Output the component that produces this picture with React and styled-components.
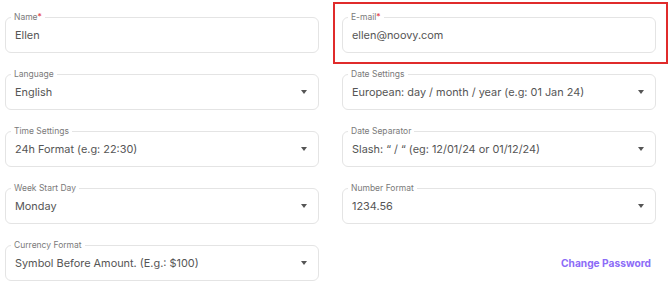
import React from "react"
import styled, { createGlobalStyle } from "styled-components"

const GlobalStyle = createGlobalStyle`
  body {
    margin: 0;
    background: #fff;
    font-family: Inter, "Noto Sans", sans-serif;
  }
`

const Form = styled.div`
  display: grid;
  grid-template-columns: 314px 314px;
  grid-auto-rows: 36px;
  column-gap: 23px;
  row-gap: 21px;
  padding: 17px 5px 0;
`

const Field = styled.div`
  position: relative;
  height: 36px;
  box-sizing: border-box;
  border: 1px solid #e4e4e4;
  border-radius: 6px;
  display: flex;
  align-items: center;
  justify-content: space-between;
  padding: 0 11px 0 9px;

  ${({ $highlighted }) =>
    $highlighted &&
    `
    &::after {
      content: "";
      position: absolute;
      top: -16px;
      left: -10px;
      right: -13px;
      bottom: -12px;
      border: 2px solid #e02b2b;
      pointer-events: none;
    }
  `}
`

const Label = styled.span`
  position: absolute;
  top: -6px;
  left: 5px;
  padding: 0 3px;
  background: #fff;
  font-size: 8.5px;
  line-height: 11px;
  color: #7a7a7a;
`

const Required = styled.span`
  color: #e5484d;
`

const Value = styled.span`
  font-size: 10.9px;
  color: #555;
  white-space: nowrap;
`

const Caret = styled.span`
  width: 0;
  height: 0;
  border-left: 3.5px solid transparent;
  border-right: 3.5px solid transparent;
  border-top: 4px solid #555;
`

const ActionCell = styled.div`
  display: flex;
  align-items: center;
  justify-content: flex-end;
  padding-right: 5px;
`

const LinkButton = styled.span`
  font-size: 10.2px;
  font-weight: 700;
  color: #8c6cf7;
  cursor: pointer;
`

const fields = [
  { label: "Name", value: "Ellen", required: true },
  { label: "E-mail", value: "ellen@noovy.com", required: true, highlighted: true },
  { label: "Language", value: "English", select: true },
  { label: "Date Settings", value: "European: day / month / year (e.g: 01 Jan 24)", select: true },
  { label: "Time Settings", value: "24h Format (e.g: 22:30)", select: true },
  { label: "Date Separator", value: "Slash: “ / “ (eg: 12/01/24 or 01/12/24)", select: true },
  { label: "Week Start Day", value: "Monday", select: true },
  { label: "Number Format", value: "1234.56", select: true },
  { label: "Currency Format", value: "Symbol Before Amount. (E.g.: $100)", select: true },
]

const App = () => {
  return (
    <>
      <GlobalStyle />
      <Form>
        {fields.map((f) => (
          <Field key={f.label} $highlighted={f.highlighted}>
            <Label>
              {f.label}
              {f.required && <Required>*</Required>}
            </Label>
            <Value>{f.value}</Value>
            {f.select && <Caret />}
          </Field>
        ))}
        <ActionCell>
          <LinkButton>Change Password</LinkButton>
        </ActionCell>
      </Form>
    </>
  )
}

export default App
